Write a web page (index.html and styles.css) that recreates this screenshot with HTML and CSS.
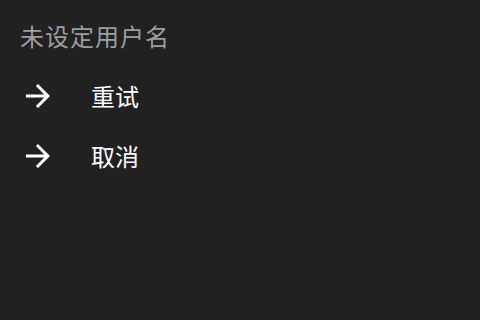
FILE: index.html
```html
<!DOCTYPE html>
<html lang="zh-CN">
<head>
<meta charset="utf-8">
<link rel="stylesheet" href="styles.css">
</head>
<body>
<div class="sheet">
  <div class="title">未设定用户名</div>
  <div class="item">
    <svg class="icon" viewBox="0 0 24 24"><path d="M12 4l-1.41 1.41L16.17 11H4v2h12.17l-5.58 5.59L12 20l8-8z"/></svg>
    <span class="label">重试</span>
  </div>
  <div class="item">
    <svg class="icon" viewBox="0 0 24 24"><path d="M12 4l-1.41 1.41L16.17 11H4v2h12.17l-5.58 5.59L12 20l8-8z"/></svg>
    <span class="label">取消</span>
  </div>
</div>
</body>
</html>
```
FILE: styles.css
```css
html, body {
  margin: 0;
  padding: 0;
  width: 480px;
  height: 320px;
  background: #212121;
  overflow: hidden;
}
.sheet {
  font-family: "Noto Sans CJK SC", "Noto Sans", sans-serif;
  font-size: 24px;
}
.title {
  color: #9e9e9e;
  line-height: 24px;
  letter-spacing: 1px;
  padding: 24px 20px 18px 20px;
}
.item {
  display: flex;
  align-items: center;
  height: 60px;
  padding-left: 20px;
}
.icon {
  width: 36px;
  height: 36px;
  fill: #ffffff;
  flex: none;
}
.label {
  color: #ffffff;
  line-height: 24px;
  margin-left: 35px;
}
```
